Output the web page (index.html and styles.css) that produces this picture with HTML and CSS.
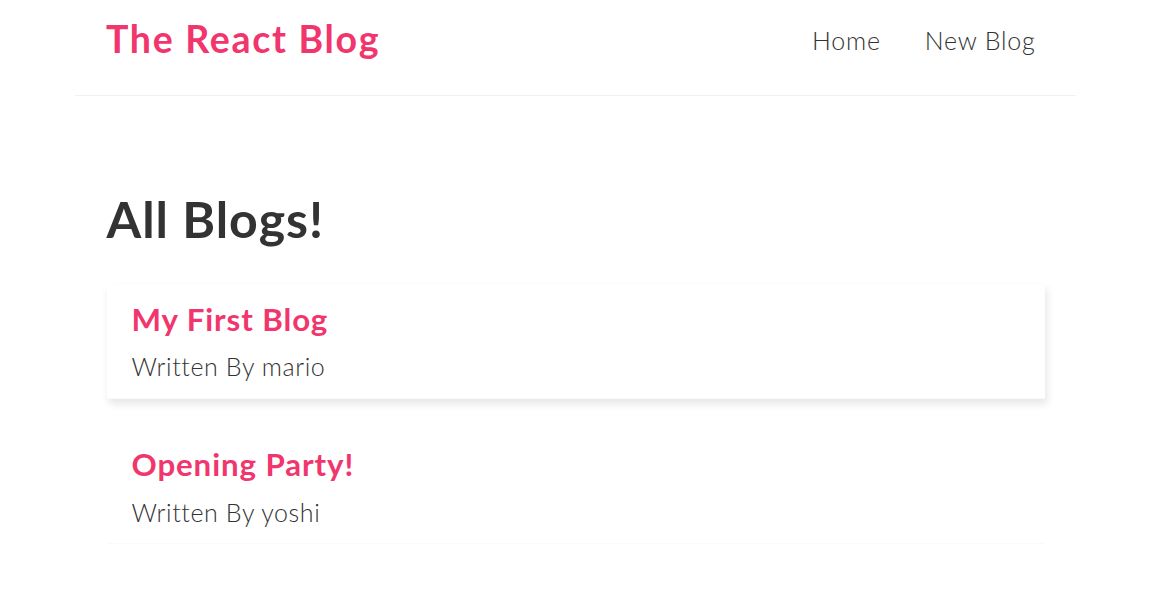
FILE: index.html
```html
<!DOCTYPE html>
<html lang="en">
<head>
<meta charset="utf-8">
<title>The React Blog</title>
<link rel="stylesheet" href="styles.css">
</head>
<body>
<div class="page">
  <nav class="navbar">
    <h1 class="brand">The React Blog</h1>
    <div class="links">
      <a href="#" class="nav-link">Home</a>
      <a href="#" class="nav-link">New Blog</a>
    </div>
  </nav>
  <main class="content">
    <h2 class="page-title">All Blogs!</h2>
    <div class="blog-list">
      <div class="blog-preview is-hovered">
        <h3 class="blog-title">My First Blog</h3>
        <p class="blog-author">Written By mario</p>
      </div>
      <div class="blog-preview">
        <h3 class="blog-title">Opening Party!</h3>
        <p class="blog-author">Written By yoshi</p>
      </div>
    </div>
  </main>
</div>
</body>
</html>
```
FILE: styles.css
```css
* {
  margin: 0;
  box-sizing: border-box;
}

body {
  margin: 0;
  background: #ffffff;
  font-family: Lato, "Open Sans", sans-serif;
  color: #333333;
}

.page {
  width: 1151px;
}

.navbar {
  width: 1001px;
  margin: 0 auto;
  display: flex;
  align-items: flex-start;
  padding: 16px 31px 0 31px;
  height: 96px;
  border-bottom: 1px solid #f2f2f2;
}

.brand {
  font-size: 37.5px;
  line-height: 46px;
  font-weight: 700;
  letter-spacing: 1.7px;
  color: #f1356d;
}

.links {
  margin-left: auto;
  display: flex;
  padding-top: 8px;
}

.nav-link {
  margin-left: 25px;
  padding: 0 9.4px;
  font-size: 25px;
  line-height: 32px;
  font-weight: 300;
  letter-spacing: 0.8px;
  color: #333333;
  text-decoration: none;
}

.content {
  width: 938px;
  margin: 0 auto;
  padding-top: 93px;
}

.page-title {
  font-size: 50px;
  line-height: 60px;
  font-weight: 700;
  letter-spacing: 1px;
  color: #333333;
}

.blog-list {
  padding-top: 35px;
  display: flex;
  flex-direction: column;
  gap: 31px;
}

.blog-preview {
  padding: 15.6px 25px;
  border-bottom: 1px solid #fafafa;
}

.blog-preview.is-hovered {
  box-shadow: 1.5px 4.7px 7.8px rgba(0, 0, 0, 0.1);
}

.blog-title {
  font-size: 31.25px;
  line-height: 39px;
  font-weight: 700;
  letter-spacing: 0.9px;
  color: #f1356d;
  margin-bottom: 12.5px;
}

.blog-author {
  font-size: 25px;
  line-height: 31px;
  font-weight: 300;
  letter-spacing: 0.6px;
  color: #333333;
}
```
